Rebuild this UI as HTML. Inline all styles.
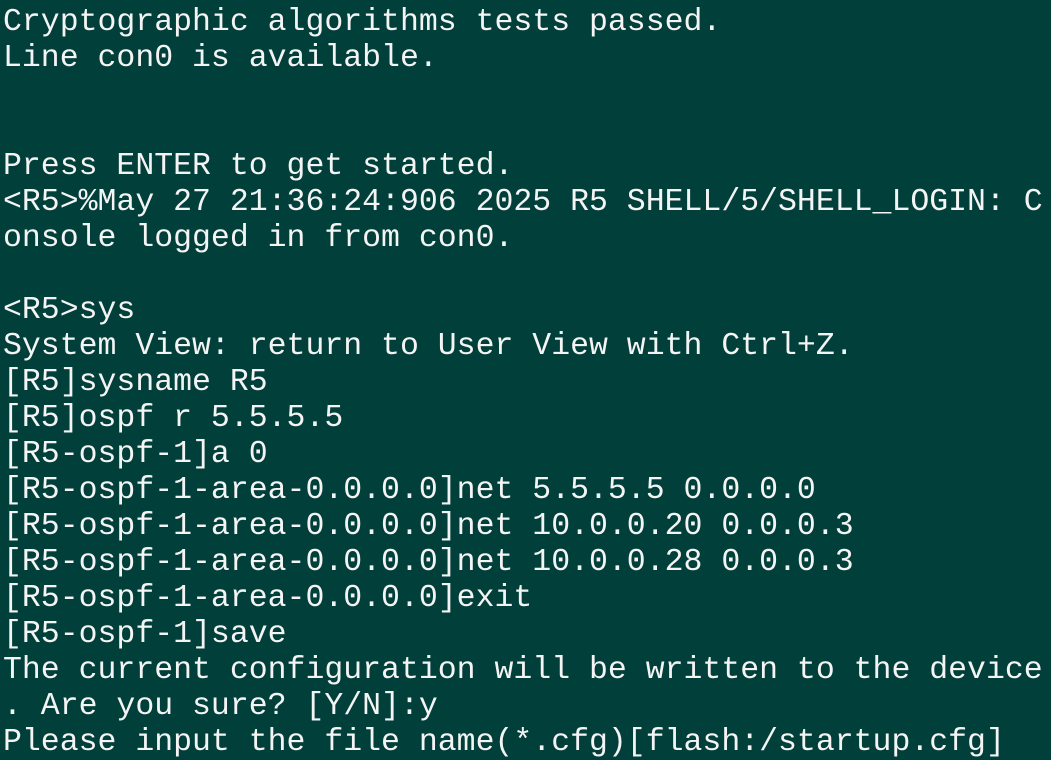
<!DOCTYPE html>
<html><head><meta charset="utf-8"><style>
html,body{margin:0;padding:0;background:#013f3a;width:1051px;height:760px;overflow:hidden}
pre{margin:0;padding:5px 0 0 3px;font-family:"Liberation Mono",monospace;font-size:31.5px;line-height:36px;color:#f4f4f4;white-space:pre}
</style></head><body><pre>Cryptographic algorithms tests passed.
Line con0 is available.


Press ENTER to get started.
&lt;R5&gt;%May 27 21:36:24:906 2025 R5 SHELL/5/SHELL_LOGIN: C
onsole logged in from con0.

&lt;R5&gt;sys
System View: return to User View with Ctrl+Z.
[R5]sysname R5
[R5]ospf r 5.5.5.5
[R5-ospf-1]a 0
[R5-ospf-1-area-0.0.0.0]net 5.5.5.5 0.0.0.0
[R5-ospf-1-area-0.0.0.0]net 10.0.0.20 0.0.0.3
[R5-ospf-1-area-0.0.0.0]net 10.0.0.28 0.0.0.3
[R5-ospf-1-area-0.0.0.0]exit
[R5-ospf-1]save
The current configuration will be written to the device
. Are you sure? [Y/N]:y
Please input the file name(*.cfg)[flash:/startup.cfg]</pre></body></html>
